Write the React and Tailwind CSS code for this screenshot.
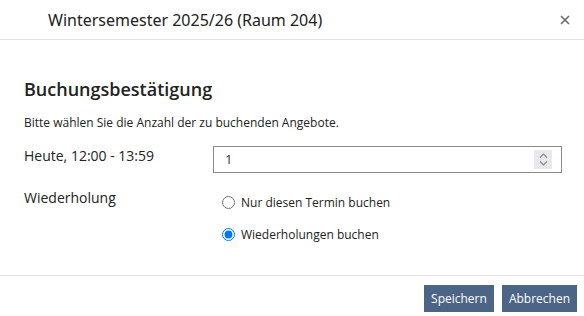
import React from "react";

const Spinner = () => (
  <div className="flex h-[19px] w-[18px] flex-col items-center justify-center gap-[3px] bg-[#e9e9ed]">
    <svg width="9" height="5" viewBox="0 0 9 5" fill="none">
      <path d="M1 4.5 4.5 1 8 4.5" stroke="#8a8a8a" strokeWidth="1.2" />
    </svg>
    <svg width="9" height="5" viewBox="0 0 9 5" fill="none">
      <path d="M1 0.5 4.5 4 8 0.5" stroke="#8a8a8a" strokeWidth="1.2" />
    </svg>
  </div>
);

export default function App() {
  return (
    <div className="flex h-[316px] w-[584px] flex-col bg-white text-[#222] font-['Open_Sans',sans-serif]">
      {/* header */}
      <div className="flex h-[40px] items-center justify-between border-b border-[#e2e2e2] pl-12 pr-[11px]">
        <h1 className="text-[16px] leading-5 font-['Noto_Sans',sans-serif] text-[#222]">
          Wintersemester 2025/26 (Raum 204)
        </h1>
        <button className="flex h-4 w-4 items-center justify-center text-[#666]">
          <svg width="10" height="10" viewBox="0 0 10 10">
            <path d="M1 1 9 9M9 1 1 9" stroke="#6a6a6a" strokeWidth="1.6" />
          </svg>
        </button>
      </div>

      {/* body */}
      <div className="flex-1 pl-6 pr-[22px] pt-[36px]">
        <h2 className="text-[18px] leading-[26px] font-semibold text-[#222]">Buchungsbestätigung</h2>
        <p className="mt-[12px] text-[12px] leading-[18px] text-[#222]">
          Bitte wählen Sie die Anzahl der zu buchenden Angebote.
        </p>

        <div className="mt-[14px] grid grid-cols-[189px_1fr]">
          <div className="text-[14px] leading-5">Heute, 12:00 - 13:59</div>
          <div className="flex h-[27px] items-center justify-between border border-[#8a8a8a] pl-[11px] pr-[9px]">
            <span className="text-[13px] text-[#333]">1</span>
            <Spinner />
          </div>

          <div className="mt-[15px] text-[14px] leading-5">Wiederholung</div>
          <div className="mt-[23px] flex flex-col gap-[19px] pl-[9px]">
            <label className="flex items-center gap-[6px] text-[12px] leading-[13px]">
              <input type="radio" name="rep" className="m-0 h-[13px] w-[13px]" />
              Nur diesen Termin buchen
            </label>
            <label className="flex items-center gap-[6px] text-[12px] leading-[13px]">
              <input type="radio" name="rep" defaultChecked className="m-0 h-[13px] w-[13px]" />
              Wiederholungen buchen
            </label>
          </div>
        </div>
      </div>

      {/* footer */}
      <div className="flex h-[41px] items-start justify-end gap-2 border-t border-[#e2e2e2] pr-[7px] pt-[9px]">
        <button className="h-[27px] bg-[#4c6586] px-[7px] text-[12px] text-white">Speichern</button>
        <button className="h-[27px] bg-[#4c6586] px-[7px] text-[12px] text-white">Abbrechen</button>
      </div>
    </div>
  );
}
